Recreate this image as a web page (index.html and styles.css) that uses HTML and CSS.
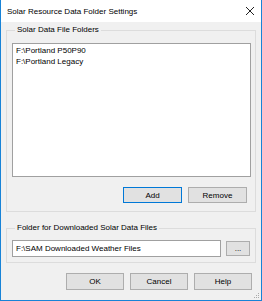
FILE: index.html
```html
<!DOCTYPE html>
<html>
<head>
<link rel="stylesheet" href="styles.css">
</head>
<body>
	<div class="window">
		<div class="titlebar">
			<span class="title">Solar Resource Data Folder Settings</span>
			<svg class="close" width="10" height="10" viewBox="0 0 10 10">
				<path d="M1 1 L9 9 M9 1 L1 9" stroke="#222" stroke-width="1" fill="none"/>
			</svg>
		</div>
		<div class="content">
			<fieldset class="group first">
				<legend>Solar Data File Folders</legend>
				<div class="listbox">
					<div class="item">F:\Portland P50P90</div>
					<div class="item">F:\Portland Legacy</div>
				</div>
				<div class="row right">
					<button class="btn default">Add</button>
					<button class="btn">Remove</button>
				</div>
			</fieldset>
			<fieldset class="group second">
				<legend>Folder for Downloaded Solar Data Files</legend>
				<div class="row">
					<div class="textbox">F:\SAM Downloaded Weather Files</div>
					<button class="btn small">...</button>
				</div>
			</fieldset>
			<div class="row right footer">
				<button class="btn">OK</button>
				<button class="btn">Cancel</button>
				<button class="btn">Help</button>
			</div>
		</div>
		<svg class="grip" width="6" height="6" viewBox="0 0 6 6">
			<rect x="4" y="0" width="1" height="1" fill="#aaa"/>
			<rect x="2" y="2" width="1" height="1" fill="#aaa"/>
			<rect x="4" y="2" width="1" height="1" fill="#aaa"/>
			<rect x="0" y="4" width="1" height="1" fill="#aaa"/>
			<rect x="2" y="4" width="1" height="1" fill="#aaa"/>
			<rect x="4" y="4" width="1" height="1" fill="#aaa"/>
		</svg>
	</div>
</body>
</html>
```

FILE: styles.css
```css
body {
	margin: 0;
	font-family: "Liberation Sans", Arial, sans-serif;
	font-size: 8px;
	color: #000;
}
.window {
	position: relative;
	width: 262px;
	height: 301px;
	box-sizing: border-box;
	border: 1px solid #1883d7;
	border-top: none;
	background: #f0f0f0;
	display: flex;
	flex-direction: column;
}
.titlebar {
	height: 22px;
	background: #fff;
	display: flex;
	align-items: center;
	justify-content: space-between;
	padding: 0 5px 0 6px;
}
.close {
	margin-right: 1px;
}
.content {
	padding: 3px 5px 0 5px;
}
.group {
	margin: 0;
	border: 1px solid #dcdcdc;
	padding: 8px 4px 8px 5px;
	min-width: 0;
}
.group legend {
	margin-left: 3px;
	padding: 0 2px;
	line-height: 10px;
}
.group.second {
	margin-top: 11px;
	padding-top: 7px;
	padding-bottom: 5px;
}
.listbox {
	height: 134px;
	box-sizing: border-box;
	border: 1px solid #a0a0a0;
	background: #fff;
	padding: 1px 3px;
}
.item {
	line-height: 11px;
}
.row {
	display: flex;
	align-items: center;
}
.row.right {
	justify-content: flex-end;
	gap: 6px;
	margin-top: 10px;
	padding-right: 4px;
}
.btn {
	width: 59px;
	height: 16px;
	box-sizing: border-box;
	border: 1px solid #adadad;
	background: #e1e1e1;
	font: inherit;
	padding: 0;
	color: #000;
}
.btn.default {
	border-color: #0078d7;
}
.btn.small {
	width: 24px;
	height: 15px;
	margin-left: 5px;
	margin-right: 1px;
}
.textbox {
	flex: 1;
	height: 17px;
	box-sizing: border-box;
	border: 1px solid #a0a0a0;
	background: #fff;
	padding: 0 3px;
	line-height: 15px;
}
.footer {
	margin-top: 13px;
	gap: 7px;
	padding-right: 5px;
}
.footer .btn {
	width: 58px;
	height: 17px;
}
.grip {
	position: absolute;
	right: 1px;
	bottom: 1px;
}
```
